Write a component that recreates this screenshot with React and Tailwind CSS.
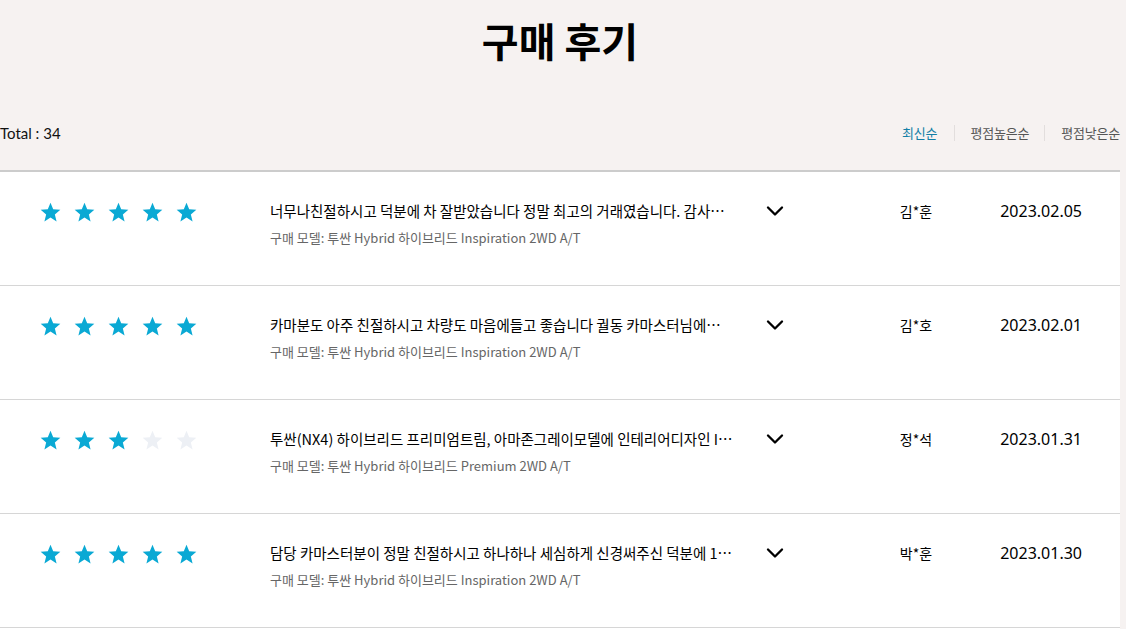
import { ChevronDown } from "lucide-react";

const reviews = [
	{
		rating: 5,
		title: "너무나친절하시고 덕분에 차 잘받았습니다 정말 최고의 거래였습니다. 감사합니다 다음에도 꼭 다시 찾겠습니다",
		model: "구매 모델: 투싼 Hybrid 하이브리드 Inspiration 2WD A/T",
		name: "김*훈",
		date: "2023.02.05",
	},
	{
		rating: 5,
		title: "카마분도 아주 친절하시고 차량도 마음에들고 좋습니다 궐동 카마스터님에게 감사드립니다",
		model: "구매 모델: 투싼 Hybrid 하이브리드 Inspiration 2WD A/T",
		name: "김*호",
		date: "2023.02.01",
	},
	{
		rating: 3,
		title: "투싼(NX4) 하이브리드 프리미엄트림, 아마존그레이모델에 인테리어디자인 I패키지 추가했습니다",
		model: "구매 모델: 투싼 Hybrid 하이브리드 Premium 2WD A/T",
		name: "정*석",
		date: "2023.01.31",
	},
	{
		rating: 5,
		title: "담당 카마스터분이 정말 친절하시고 하나하나 세심하게 신경써주신 덕분에 1년을 기다린 보람이 있었습니다",
		model: "구매 모델: 투싼 Hybrid 하이브리드 Inspiration 2WD A/T",
		name: "박*훈",
		date: "2023.01.30",
	},
	{
		rating: 5,
		title: "빠른 출고 감사합니다",
		model: "구매 모델: 투싼 Hybrid 하이브리드 Inspiration 2WD A/T",
		name: "이*민",
		date: "2023.01.28",
	},
];

const Star = ({ filled }) => (
	<svg width="21" height="20" viewBox="0 0 24 23" className={filled ? "text-[#0aa9d4]" : "text-[#edf0f5]"}>
		<path
			fill="currentColor"
			d="M12 0.8l3.1 7.6 8.2 0.6-6.3 5.3 2 8-7-4.4-7 4.4 2-8L0.7 9l8.2-0.6z"
		/>
	</svg>
);

const App = () => {
	return (
		<div className="min-h-screen bg-[#f6f2f1] font-['Noto_Sans_CJK_KR','Noto_Sans',sans-serif]">
			<div className="w-[1120px]">
				<h1 className="pt-4 text-center text-[40px] font-bold leading-[48px] text-black">
					구매 후기
				</h1>

				{/* Total + sort */}
				<div className="mt-[59px] mb-[27px] flex h-5 items-center justify-between">
					<span className="text-[15px] text-[#111] font-['Lato','Noto_Sans_CJK_KR',sans-serif]">Total : 34</span>
					<div className="flex items-center text-[13px] tracking-[-0.2px]">
						<button className="text-[#137fa6]">최신순</button>
						<span className="ml-[17px] mr-[15px] h-4 w-px bg-[#e2dedd]" />
						<button className="text-[#555]">평점높은순</button>
						<span className="ml-[15px] mr-4 h-4 w-px bg-[#e2dedd]" />
						<button className="text-[#555]">평점낮은순</button>
					</div>
				</div>

				{/* Reviews */}
				<div className="border-t-2 border-[#cccccc] bg-white">
					{reviews.map((review, i) => (
						<div key={i} className="flex h-[114px] border-b border-[#d6d6d6] pt-[29px]">
							<div className="flex w-[270px] gap-[13px] pl-[40px] pt-[1px]">
								{[1, 2, 3, 4, 5].map((s) => (
									<Star key={s} filled={s <= review.rating} />
								))}
							</div>
							<div className="w-[464px]">
								<p className="truncate text-[14.5px] leading-5 text-black">{review.title}</p>
								<p className="mt-2 text-[13px] leading-[18px] text-[#666]">{review.model}</p>
							</div>
							<div className="ml-[27px] flex h-5 items-center">
								<ChevronDown size={28} strokeWidth={2} className="text-black" />
							</div>
							<div className="ml-[72px] h-5 w-[110px] text-center text-[14px] leading-5 text-black">
								{review.name}
							</div>
							<div className="ml-[5px] h-5 w-[106px] text-right text-[16px] leading-5 text-black font-['Noto_Sans',sans-serif]">
								{review.date}
							</div>
						</div>
					))}
				</div>
			</div>
		</div>
	);
};

export default App;
